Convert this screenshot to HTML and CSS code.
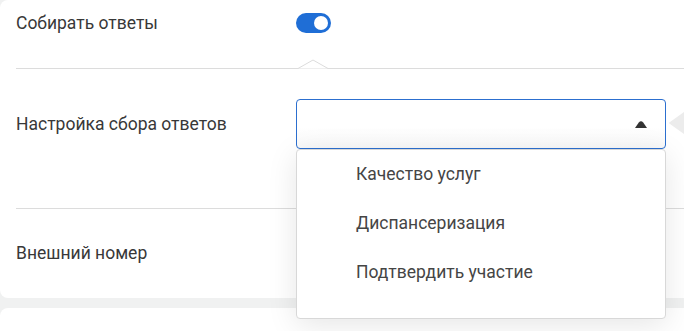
FILE: index.html
```html
<!doctype html>
<html>
	<head>
		<meta charset="UTF-8">
		<title>Настройки</title>
		<link rel="stylesheet" href="styles.css">
	</head>
	<body>
		<div class="card">
			<div class="row row-first">
				<div class="label">Собирать ответы</div>
				<div class="toggle"><span class="knob"></span></div>
				<svg class="notch" width="30" height="10" viewBox="0 0 30 10">
					<path d="M0 9.5 L15 1 L30 9.5" fill="#fff" stroke="#dcdcdc" stroke-width="1"/>
				</svg>
			</div>
			<div class="row row-select">
				<div class="label">Настройка сбора ответов</div>
				<div class="select-wrap">
					<div class="select">
						<svg class="arrow" width="12" height="7" viewBox="0 0 12 7">
							<path d="M0 7 L3.8 1.6 Q6 -1 8.2 1.6 L12 7 Z" fill="#333"/>
						</svg>
					</div>
					<ul class="menu">
						<li class="item">Качество услуг</li>
						<li class="item">Диспансеризация</li>
						<li class="item">Подтвердить участие</li>
					</ul>
				</div>
				<svg class="side-tip" width="16" height="22" viewBox="0 0 16 22">
					<path d="M16 0 L2 10 Q0 11 2 12 L16 22 Z" fill="#ececec"/>
				</svg>
			</div>
			<div class="row row-last">
				<div class="label">Внешний номер</div>
			</div>
		</div>
		<div class="card card-next"></div>
	</body>
</html>
```

FILE: styles.css
```css
body{
	margin:0;
	background-color:#f0f1f1;
	font-family:Roboto,"Noto Sans",sans-serif;
	font-size:17.5px;
	color:#383838;
	overflow:hidden;
}
.card{
	background:#fff;
	border-radius:8px 0 0 8px;
}
.card-next{margin-top:10px;height:23px;border-radius:8px 0 0 0}
.row{
	position:relative;
	display:flex;
	align-items:center;
	margin-left:16px;
	border-bottom:1px solid #dcdcdc;
}
.row-first{padding:13px 0 35px}
.row-select{padding:30px 0 59px;align-items:flex-start}
.row-select .label{line-height:50px}
.row-last{padding:34px 0 35px;border-bottom:none}
.label{width:280px;line-height:20px;flex:none}
.toggle{
	width:35px;height:20px;border-radius:10px;
	background:#1f6ed6;
	display:flex;align-items:center;justify-content:flex-end;
	padding:0 3px;box-sizing:border-box;
}
.knob{width:14px;height:14px;border-radius:50%;background:#fff}
.notch{position:absolute;left:282px;bottom:-1px}
.select-wrap{position:relative;width:370px}
.select{
	height:50px;box-sizing:border-box;
	border:1px solid #2c6fcf;border-radius:4px;
	background:linear-gradient(#fff 55%,#f9f9f9);
	display:flex;align-items:center;justify-content:flex-end;
	padding:1px 18px 0 0;
}
.arrow{display:block}
.menu{
	position:absolute;left:0;right:0;top:50px;
	margin:0;padding:0 0 21px;list-style:none;
	background:#fff;border:1px solid #d8d8d8;border-radius:4px;
	box-shadow:0 6px 30px rgba(0,0,0,0.10);
	z-index:2;
}
.item{height:49px;line-height:48px;padding-left:59px;color:#454545}
.side-tip{position:absolute;left:652px;top:43px}
```
